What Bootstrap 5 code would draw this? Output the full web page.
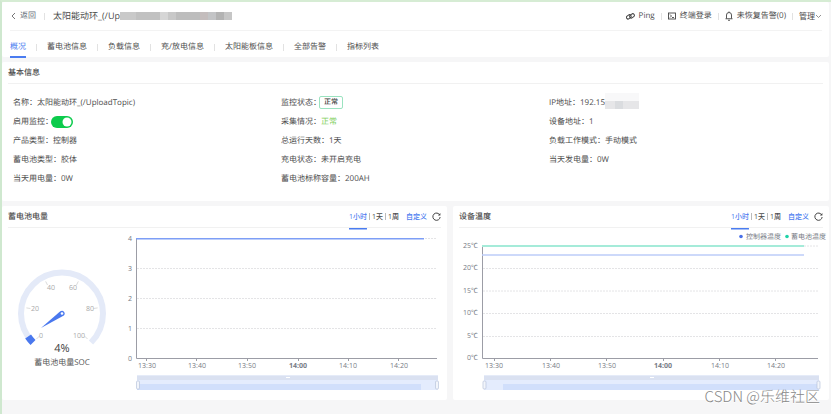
<!DOCTYPE html>
<html lang="zh-CN">
<head>
<meta charset="utf-8">
<meta name="viewport" content="width=device-width, initial-scale=1">
<title>太阳能动环</title>
<link href="https://cdn.jsdelivr.net/npm/bootstrap@5.3.0/dist/css/bootstrap.min.css" rel="stylesheet">
<style>
body{font-family:"Open Sans","Noto Sans CJK SC",sans-serif;font-size:8px;line-height:12px;color:#4c4c4c;text-rendering:geometricPrecision;background:#f6f6f7;border-left:2px solid #cfe8cf;border-top:2px solid #d6ecd4;min-height:100vh}
a,.plain-btn{color:inherit;text-decoration:none}
.plain-btn{border:0;background:none;padding:0;font-size:inherit;line-height:inherit}
.page{padding-right:2px}
.panel{background:#fff;border-radius:2px}
.head-row{height:29px;margin:0 7px 0 8px;border-bottom:1px solid #f3f3f3}
.sep{width:1px;height:7px;background:#e2e2e2}
.page-title{font-size:9px;color:#4c4c4c}
.mask-title{width:112px;height:8px;background:linear-gradient(90deg,#c9c9c9 0 16px,#c1c1c1 16px 40px,#d6d6d6 40px 48px,#c8c8c8 48px 56px,#bdbdbd 56px 80px,#c4bdbd 80px 88px,#c3c4c6 88px 96px,#b3b3b3 96px 104px,#c6c6c6 104px)}
.mask-ip{width:34px;height:16px;margin-top:-4px;background:linear-gradient(#f8f8f9,#f8f8f9) 0 0/100% 8px no-repeat,linear-gradient(90deg,#e6e6e8 0 10px,#dadcdf 10px 18px,#e6e6e8 18px)}
.tools-gap{gap:6px}
.tab-bar{height:26px;gap:10px;margin-left:8px;padding-top:6px}
.tab-bar a{line-height:20px;height:21px;border-bottom:2px solid transparent}
.tab-bar .active{color:#4a7cf0;border-bottom-color:#4a7cf0}
.mt-panel{margin-top:5px}
.panel-title{height:22px;margin:0 6px;border-bottom:1px solid #f1f1f1;font-weight:500}
.fields{padding:9px 12px 13px 11px}
.fields .col{height:19px}
.form-switch .form-check-input{width:22px;height:12px;margin:0 0 0 -2px;border:0;background-color:#0ccb4c!important;float:none}
.form-switch{padding:0;min-height:0}
.status-tag{border:1px solid #9be3c0;border-radius:2px;font-size:7px;line-height:11px;padding:0 4px;margin-left:-2px;color:#333;font-weight:500}
.text-ok{color:#83cf62}
.charts{gap:6px}
.battery{flex:445 1 0;min-width:0}
.heat{flex:376 1 0;min-width:0}
.ranges{font-size:7px;gap:2px;font-weight:500}
.ranges .sep{background:#bbb}
.ranges .plain-btn{height:22px;font-weight:500}
.ranges .active{color:#4a7cf0;box-shadow:0 2px 0 #4a7cf0;clip-path:inset(0 0 -2px 0)}
.ranges .range-btn{height:22px}
.ranges .custom{color:#4a7cf0;margin-left:5px}
.ranges .reload{margin-left:3px}
.gauge{flex:120 1 0;min-width:0}
.plot{flex:325 1 0;min-width:0}
svg{display:block}
svg text{font-size:7px;fill:#777b85}
.dial text{fill:#aaa}
.dial .reading{font-size:11px;fill:#444}
.dial .caption-line{font-size:8px;fill:#555}
.watermark{position:absolute;right:11px;bottom:5px;font-family:"Noto Sans CJK SC",sans-serif;font-weight:300;font-size:15px;line-height:20px;color:#888;text-shadow:0 1px 0 #fff;pointer-events:none}
.stage{position:relative;padding-bottom:12px}
</style>
<script src="https://cdn.jsdelivr.net/npm/bootstrap@5.3.0/dist/js/bootstrap.bundle.min.js"></script>
</head>
<body>
<div class="page stage">
<header class="panel">
  <div class="head-row d-flex align-items-center justify-content-between">
    <div class="d-flex align-items-center">
      <a href="#" class="d-flex align-items-center text-secondary"><svg width="10" height="8" viewBox="0 0 10 8" fill="none" stroke="#777"><path d="M5 1 2 4l3 3"/></svg>返回</a>
      <span class="sep mx-2"></span>
      <span class="page-title">太阳能动环_(/Up</span><span class="mask-title"></span>
    </div>
    <div class="d-flex align-items-center tools-gap">
      <a href="#" class="d-flex align-items-center gap-1"><svg width="9" height="9" viewBox="0 0 18 18" fill="none" stroke="#444" stroke-width="2"><rect x="0.5" y="6.5" width="10" height="6.5" rx="3.2" transform="rotate(-38 5.5 9.7)"/><rect x="7" y="4.5" width="10" height="6.5" rx="3.2" transform="rotate(-38 12 7.7)"/></svg>Ping</a>
      <span class="sep"></span>
      <a href="#" class="d-flex align-items-center gap-1"><svg width="8" height="8" viewBox="0 0 16 16" fill="none" stroke="#444" stroke-width="1.8"><rect x="1" y="2" width="14" height="12"/><path d="m4 5 3 3-3 3M8 11h4"/></svg>终端登录</a>
      <span class="sep"></span>
      <a href="#" class="d-flex align-items-center gap-1"><svg width="8" height="10" viewBox="0 0 16 20" fill="none" stroke="#444" stroke-width="1.8"><path d="M8 1v2M3 15V8a5 5 0 0 1 10 0v7M1 15.5h14M6 18.5h4"/></svg>未恢复告警(0)</a>
      <span class="sep"></span>
      <button type="button" class="plain-btn d-flex align-items-center">管理<svg width="7" height="5" viewBox="0 0 7 5" fill="none" stroke="#777" stroke-width=".8"><path d="m1 1 2.5 2.5L6 1"/></svg></button>
    </div>
  </div>
  <nav class="tab-bar d-flex align-items-center" aria-label="设备">
    <a href="#" class="active">概况</a><span class="sep"></span>
    <a href="#">蓄电池信息</a><span class="sep"></span>
    <a href="#">负载信息</a><span class="sep"></span>
    <a href="#">充/放电信息</a><span class="sep"></span>
    <a href="#">太阳能板信息</a><span class="sep"></span>
    <a href="#">全部告警</a><span class="sep"></span>
    <a href="#">指标列表</a>
  </nav>
</header>

<section class="panel mt-panel">
  <div class="panel-title d-flex align-items-center">基本信息</div>
  <div class="fields">
    <div class="row g-0 row-cols-3">
      <div class="col d-flex align-items-center">名称：<span>太阳能动环_(/UploadTopic)</span></div>
      <div class="col d-flex align-items-center">监控状态：<span class="status-tag">正常</span></div>
      <div class="col d-flex align-items-center">IP地址：<span>192.15</span><span class="mask-ip"></span></div>
      <div class="col d-flex align-items-center"><label for="watch">启用监控：</label><span class="form-check form-switch mb-0 d-flex"><input class="form-check-input" type="checkbox" role="switch" id="watch" checked></span></div>
      <div class="col d-flex align-items-center">采集情况：<span class="text-ok">正常</span></div>
      <div class="col d-flex align-items-center">设备地址：<span>1</span></div>
      <div class="col d-flex align-items-center">产品类型：<span>控制器</span></div>
      <div class="col d-flex align-items-center">总运行天数：<span>1天</span></div>
      <div class="col d-flex align-items-center">负载工作模式：<span>手动模式</span></div>
      <div class="col d-flex align-items-center">蓄电池类型：<span>胶体</span></div>
      <div class="col d-flex align-items-center">充电状态：<span>未开启充电</span></div>
      <div class="col d-flex align-items-center">当天发电量：<span>0W</span></div>
      <div class="col d-flex align-items-center">当天用电量：<span>0W</span></div>
      <div class="col d-flex align-items-center">蓄电池标称容量：<span>200AH</span></div>
    </div>
  </div>
</section>

<div class="charts d-flex mt-panel">
  <section class="panel battery">
    <div class="panel-title d-flex align-items-center justify-content-between">蓄电池电量
      <div class="ranges d-flex align-items-center">
        <button type="button" class="plain-btn active">1小时</button><span class="sep"></span>
        <button type="button" class="plain-btn">1天</button><span class="sep"></span>
        <button type="button" class="plain-btn">1周</button>
        <button type="button" class="plain-btn custom">自定义</button>
        <button type="button" class="plain-btn reload d-flex align-items-center" aria-label="刷新"><svg width="9" height="9" viewBox="0 0 18 18" fill="none" stroke="#444" stroke-width="2"><path d="M15.5 6A7.3 7.3 0 1 0 16.3 10"/><path d="M16.8 2v5h-5z" fill="#444" stroke="none"/></svg></button>
      </div>
    </div>
    <div class="d-flex">
      <div class="gauge">
        <svg class="dial" width="100%" viewBox="2 228 120 172" fill="none">
          <path d="M33 342.5A41 41 0 1 1 91 342.5" stroke="#e4eaf8" stroke-width="6"/>
          <path d="M33 342.5A41 41 0 0 1 28.1 336.5" stroke="#4a78ee" stroke-width="7"/>
          <path d="M36.5 339 39.4 336.1M26.4 307.9 30.4 308.5M45.7 281.4 47.5 285M78.3 281.4 76.5 285M97.6 307.9 93.6 308.5M87.5 339 84.6 336.1" stroke="#ccc" stroke-width=".7"/>
          <path d="M41 328 60.3 311.3A2.7 2.7 0 1 1 63.4 315.8Z" fill="#4a78ee"/><circle cx="62" cy="313.5" r="1.3" fill="#fff"/>
          <text x="31" y="311">20</text><text x="47" y="290">40</text><text x="69" y="290">60</text><text x="86" y="311">80</text><text x="39" y="338">0</text><text x="73" y="338">100</text>
          <text class="reading" x="62" y="352" text-anchor="middle">4%</text>
          <text class="caption-line" x="62" y="365" text-anchor="middle">蓄电池电量SOC</text>
        </svg>
      </div>
      <div class="plot">
        <svg width="100%" viewBox="122 228 325 172" fill="none">
          <path d="M137 238.5H437M137 268.5H437M137 298.5H437M137 328.5H437" stroke="#e4e4e6" stroke-dasharray="2 1"/>
          <path d="M136.5 238V358.5H437M146.5 359v2M196.5 359v2M247.5 359v2M298.5 359v2M348.5 359v2M398.5 359v2" stroke="#9c9da6"/>
          <path d="M136 238.7H424" stroke="#7d9ef6" stroke-width="1.5"/>
          <g text-anchor="end"><text x="132" y="241">4</text><text x="132" y="271">3</text><text x="132" y="301">2</text><text x="132" y="331">1</text><text x="132" y="361">0</text></g>
          <g text-anchor="middle"><text x="147" y="368">13:30</text><text x="197" y="368">13:40</text><text x="247" y="368">13:50</text><text x="298" y="368" font-weight="700">14:00</text><text x="348" y="368">14:10</text><text x="399" y="368">14:20</text></g>
          <path d="M137 375.5H438V390H137Z" fill="#e4ecfd"/><path d="M137 375.5H438V380H137Z" fill="#dae1f1"/><path d="M137 384H421V390H137Z" fill="#d1dffb"/>
          <path d="M286 377.5h4" stroke="#fff"/>
          <g fill="#f2f5fb" stroke="#b9c4db" stroke-width=".7"><rect x="136.5" y="381" width="3" height="8" rx="1"/><rect x="435.5" y="381" width="3" height="8" rx="1"/></g>
        </svg>
      </div>
    </div>
  </section>

  <section class="panel heat">
    <div class="panel-title d-flex align-items-center justify-content-between">设备温度
      <div class="ranges d-flex align-items-center">
        <button type="button" class="plain-btn active">1小时</button><span class="sep"></span>
        <button type="button" class="plain-btn">1天</button><span class="sep"></span>
        <button type="button" class="plain-btn">1周</button>
        <button type="button" class="plain-btn custom">自定义</button>
        <button type="button" class="plain-btn reload d-flex align-items-center" aria-label="刷新"><svg width="9" height="9" viewBox="0 0 18 18" fill="none" stroke="#444" stroke-width="2"><path d="M15.5 6A7.3 7.3 0 1 0 16.3 10"/><path d="M16.8 2v5h-5z" fill="#444" stroke="none"/></svg></button>
      </div>
    </div>
    <svg width="100%" viewBox="453 228 376 172" fill="none">
      <circle cx="741" cy="236.5" r="1.8" fill="#4a70e8"/><text x="746" y="239">控制器温度</text>
      <circle cx="787" cy="236.5" r="1.8" fill="#1fd3a8"/><text x="791" y="239">蓄电池温度</text>
      <path d="M483 246H818M483 268.5H818M483 291H818M483 313.5H818M483 336.5H818" stroke="#e4e4e6" stroke-dasharray="2 1"/>
      <path d="M482.5 246V358.5H818M494.5 359v2M550.5 359v2M606.5 359v2M663.5 359v2M719.5 359v2M775.5 359v2" stroke="#9c9da6"/>
      <path d="M482 246H804" stroke="#a5ebd9" stroke-width="2"/><path d="M482 255H804" stroke="#bccdf8" stroke-width="1.5"/>
      <g text-anchor="end"><text x="478" y="248">25℃</text><text x="478" y="270">20℃</text><text x="478" y="293">15℃</text><text x="478" y="315">10℃</text><text x="478" y="338">5℃</text><text x="478" y="360">0℃</text></g>
      <g text-anchor="middle"><text x="494" y="368">13:30</text><text x="551" y="368">13:40</text><text x="607" y="368">13:50</text><text x="663" y="368" font-weight="700">14:00</text><text x="720" y="368">14:10</text><text x="776" y="368">14:20</text></g>
      <path d="M484 375.5H819V390H484Z" fill="#e4ecfd"/><path d="M484 375.5H819V380H484Z" fill="#dae1f1"/><path d="M503 384H819V390H503Z" fill="#d1dffb"/>
      <path d="M650 377.5h4" stroke="#fff"/>
      <g fill="#f2f5fb" stroke="#b9c4db" stroke-width=".7"><rect x="483" y="381" width="3" height="8" rx="1"/><rect x="817" y="381" width="3" height="8" rx="1"/></g>
    </svg>
  </section>
</div>
<div class="watermark">CSDN @乐维社区</div>
</div>
</body>
</html>
